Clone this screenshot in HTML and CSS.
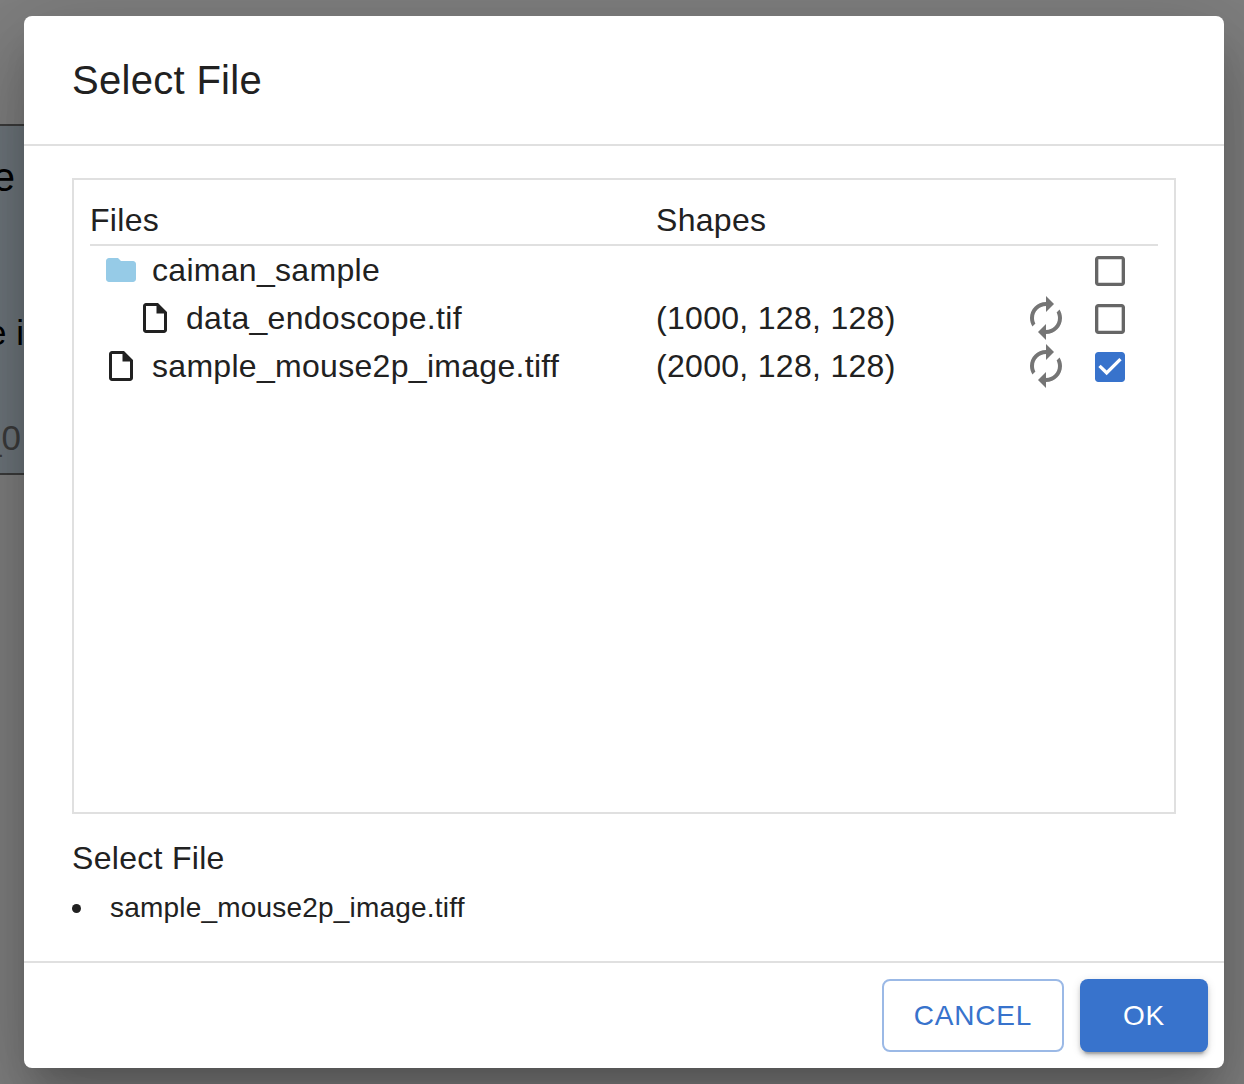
FILE: index.html
```html
<!DOCTYPE html>
<html lang="en">
<head>
<meta charset="utf-8">
<title>Select File</title>
<link rel="stylesheet" href="styles.css">
</head>
<body>
<svg class="sprite" aria-hidden="true">
  <symbol id="folder" viewBox="0 0 24 24"><path d="M10 4H4c-1.1 0-1.99.9-1.99 2L2 18c0 1.1.9 2 2 2h16c1.1 0 2-.9 2-2V8c0-1.1-.9-2-2-2h-8l-2-2z"/></symbol>
  <symbol id="file" viewBox="0 0 24 24"><path d="M6 2c-1.1 0-1.99.9-1.99 2L4 20c0 1.1.89 2 1.99 2H18c1.1 0 2-.9 2-2V8l-6-6H6zm0 18V4h7v5h5v11H6z"/></symbol>
  <symbol id="renew" viewBox="0 0 24 24"><path d="M12 6v3l4-4-4-4v3c-4.42 0-8 3.58-8 8 0 1.57.46 3.03 1.24 4.26L6.7 14.8c-.45-.83-.7-1.79-.7-2.8 0-3.31 2.69-6 6-6zm6.76 1.74L17.3 9.2c.44.84.7 1.79.7 2.8 0 3.31-2.69 6-6 6v-3l-4 4 4 4v-3c4.42 0 8-3.58 8-8 0-1.57-.46-3.03-1.24-4.26z"/></symbol>
  <symbol id="box" viewBox="0 0 24 24"><path d="M19 5v14H5V5h14m0-2H5c-1.1 0-2 .9-2 2v14c0 1.1.9 2 2 2h14c1.1 0 2-.9 2-2V5c0-1.1-.9-2-2-2z"/></symbol>
  <symbol id="box-checked" viewBox="0 0 24 24"><path d="M19 3H5c-1.11 0-2 .9-2 2v14c0 1.1.89 2 2 2h14c1.11 0 2-.9 2-2V5c0-1.1-.89-2-2-2zm-9 14l-5-5 1.41-1.41L10 14.17l7.59-7.59L19 8l-9 9z"/></symbol>
</svg>
<div class="node">
  <span class="node-title">e</span>
  <span class="node-label">e i</span>
  <span class="node-id">_0</span>
</div>
<div class="backdrop">
  <div class="dialog">
    <h2 class="title">Select File</h2>
    <div class="content">
      <div class="tree">
        <div class="row head"><span class="name">Files</span><span class="shape">Shapes</span></div>
        <div class="row">
          <div class="name item"><svg class="icon folder"><use href="#folder"/></svg><span>caiman_sample</span></div>
          <span class="shape"></span>
          <svg class="check"><use href="#box"/></svg>
        </div>
        <div class="row">
          <div class="name item nested"><svg class="icon"><use href="#file"/></svg><span>data_endoscope.tif</span></div>
          <span class="shape">(1000, 128, 128)</span>
          <svg class="renew"><use href="#renew"/></svg>
          <svg class="check"><use href="#box"/></svg>
        </div>
        <div class="row">
          <div class="name item"><svg class="icon"><use href="#file"/></svg><span>sample_mouse2p_image.tiff</span></div>
          <span class="shape">(2000, 128, 128)</span>
          <svg class="renew"><use href="#renew"/></svg>
          <svg class="check checked"><use href="#box-checked"/></svg>
        </div>
      </div>
      <div class="selected-title">Select File</div>
      <ul class="selected"><li>sample_mouse2p_image.tiff</li></ul>
    </div>
    <div class="actions">
      <button class="btn cancel">CANCEL</button>
      <button class="btn ok">OK</button>
    </div>
  </div>
</div>
</body>
</html>
```

FILE: styles.css
```css
* { box-sizing: border-box; }
body {
  margin: 0;
  height: 1084px;
  overflow: hidden;
  position: relative;
  background: #fff;
  font-family: "Liberation Sans", Arial, sans-serif;
  color: #212121;
}
.sprite { position: absolute; width: 0; height: 0; }
svg { fill: currentColor; flex: none; }

/* canvas node behind the dialog */
.node {
  position: absolute;
  left: -300px;
  top: 124px;
  width: 500px;
  height: 351px;
  border: 2px solid #777;
  background: #dbeaf6;
  color: #000;
  line-height: 40px;
}
.node span { position: absolute; right: 183px; white-space: nowrap; }
.node .node-title { top: 31px; font-size: 40px; }
.node .node-label { top: 187px; right: 174px; font-size: 35px; }
.node .node-id { top: 292px; right: 177px; font-size: 35px; color: #777; }

.backdrop {
  position: absolute;
  inset: 0;
  padding: 16px 20px 16px 24px;
  background: rgba(0, 0, 0, .5);
}
.dialog {
  display: flex;
  flex-direction: column;
  width: 1200px;
  height: 1052px;
  border-radius: 8px;
  background: #fff;
  box-shadow: 0 22px 30px -14px rgba(0,0,0,.2), 0 48px 76px 6px rgba(0,0,0,.14), 0 18px 92px 16px rgba(0,0,0,.12);
}
.title {
  margin: 0;
  padding: 32px 48px;
  height: 128px;
  font-size: 40px;
  font-weight: 400;
  line-height: 64px;
  letter-spacing: .3px;
}
.content {
  flex: 1;
  padding: 32px 48px 0;
  border-top: 2px solid #e0e0e0;
  border-bottom: 2px solid #e0e0e0;
  font-size: 32px;
  line-height: 48px;
  letter-spacing: .3px;
}
.tree {
  height: 636px;
  padding: 16px;
  border: 2px solid #e0e0e0;
}
.row { display: flex; align-items: center; height: 48px; }
.head { height: 50px; border-bottom: 2px solid #e0e0e0; }
.name { width: 566px; }
.item { display: flex; align-items: center; gap: 13px; padding-left: 13px; }
.nested { padding-left: 47px; }
.shape { flex: 1; }
.icon { width: 36px; height: 36px; }
.folder { color: #96cbe7; }
.renew { width: 48px; height: 48px; margin-right: 20px; color: #757575; }
.check { width: 40px; height: 40px; margin: 2px 28px 0 0; color: #666; }
.checked { color: #3873cc; }
.selected-title { margin-top: 20px; }
.selected {
  margin: 5px 0 0;
  padding: 0;
  list-style: none;
  font-size: 28px;
  line-height: 42px;
  letter-spacing: .2px;
}
.selected li { display: flex; align-items: center; gap: 29px; }
.selected li::before {
  content: "";
  width: 9px;
  height: 9px;
  border-radius: 50%;
  background: #212121;
}
.actions {
  display: flex;
  justify-content: flex-end;
  gap: 16px;
  height: 105px;
  padding: 16px;
}
.btn {
  height: 73px;
  padding: 0;
  border: 0;
  border-radius: 8px;
  font: 28px/49px "Liberation Sans", Arial, sans-serif;
  letter-spacing: .8px;
}
.cancel { width: 182px; border: 2px solid #9bb9e6; background: #fff; color: #3873cc; }
.ok {
  width: 128px;
  background: #3873cc;
  color: #fff;
  box-shadow: 0 6px 2px -4px rgba(0,0,0,.2), 0 4px 4px rgba(0,0,0,.14), 0 2px 10px rgba(0,0,0,.12);
}
```
